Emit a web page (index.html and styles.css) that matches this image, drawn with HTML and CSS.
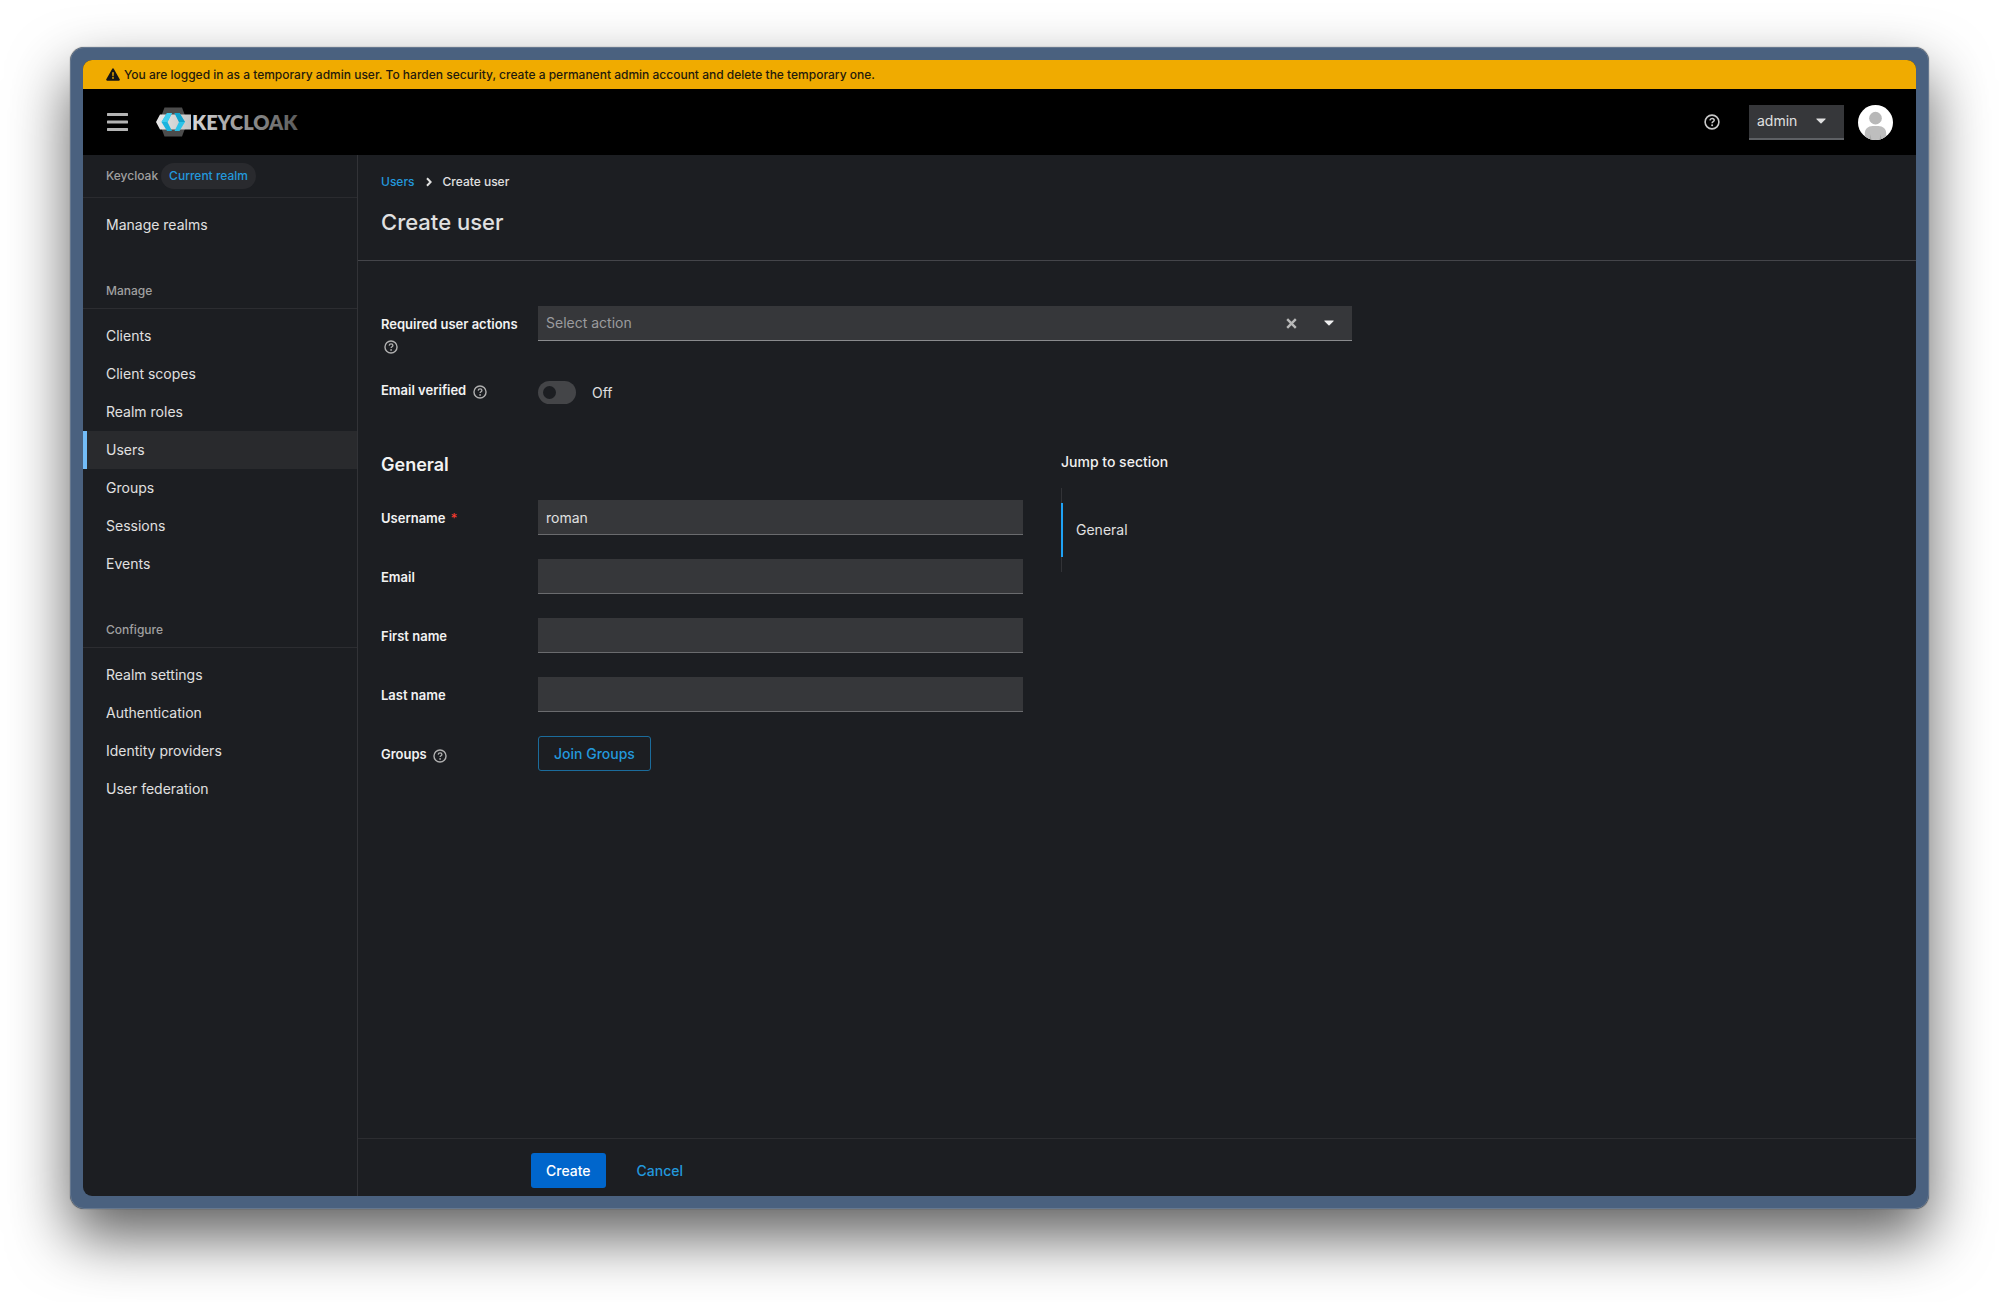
FILE: index.html
```html
<!DOCTYPE html>
<html lang="en">
<head>
<meta charset="utf-8">
<meta name="viewport" content="width=device-width, initial-scale=1">
<title>Create user - Keycloak</title>
<link rel="stylesheet" href="styles.css">
</head>
<body>
<svg class="defs" width="0" height="0" aria-hidden="true">
  <symbol id="help" viewBox="0 0 16 16">
    <circle cx="8" cy="8" r="6.9" fill="none" stroke="currentColor" stroke-width="1.6"/>
    <path d="M5.9 6.4c.2-1.3 1-2 2.2-2s2.1.8 2.1 1.8c0 1.5-2.1 1.5-2.1 3" fill="none" stroke="currentColor" stroke-width="1.5"/>
    <circle cx="8.1" cy="11.3" r="1" fill="currentColor"/>
  </symbol>
  <symbol id="caret" viewBox="0 0 10 6"><path d="M.8.5h8.4c.5 0 .6.5.3.8L5.5 5.2a.7.7 0 0 1-1 0L.5 1.300C.2 1 .3.5.8.5z" fill="currentColor"/></symbol>
</svg>
<div class="window">
  <div class="screen">
    <div class="banner" role="status">
      <svg width="14" height="13" viewBox="0 0 14 13" aria-hidden="true"><path fill="#151515" fill-rule="evenodd" d="M7 .3c.4 0 .7.200.9.600l5.800 10.300c.4.700 0 1.500-.9 1.500H1.200c-.9 0-1.300-.8-.9-1.500L6.100.9c.2-.4.500-.6.900-.6zM6.200 4.200l.2 4h1.200l.2-4zM7 9a.9.900 0 1 0 0 1.800A.9.900 0 0 0 7 9z"/></svg>
      <span>You are logged in as a temporary admin user. To harden security, create a permanent admin account and delete the temporary one.</span>
    </div>
    <header class="masthead">
      <button class="icon-button menu" type="button" aria-label="Global navigation">
        <svg width="21" height="18" viewBox="0 0 21 18"><path d="M1 1.500h19M1 9h19M1 16.500h19" stroke="currentColor" stroke-width="3" stroke-linecap="round"/></svg>
      </button>
      <a class="brand" href="#" aria-label="Keycloak">
        <svg width="160" height="30" viewBox="0 0 160 30">
          <defs>
            <linearGradient id="word" x1="0" x2="1" y1="0" y2="0"><stop offset="0" stop-color="#d8d8d8"/><stop offset=".55" stop-color="#8c8c8c"/><stop offset="1" stop-color="#5c5c5c"/></linearGradient>
            <linearGradient id="bar" x1="0" x2="1" y1="0" y2="0"><stop offset="0" stop-color="#e8e8e8"/><stop offset="1" stop-color="#c4c4c4"/></linearGradient>
          </defs>
          <path d="M8.500 .500h17.500l5.500 14.500L26 29.500H8.500L3 15z" fill="#4c4c4c"/>
          <path d="M4 7.500h31v15H4L0 15z" fill="url(#bar)"/>
          <path d="M11 6h5L11.500 15l4.500 9H11L5.500 15z" fill="#1cb4de"/>
          <path d="M11 6h5L11.500 15H5.500z" fill="#3fcdee"/>
          <path d="M18.500 6h5L29 15l-5.500 9h-5L23 15z" fill="#2cc3e8"/>
          <path d="M18.500 6h5L29 15H23z" fill="#12a2ca"/>
          <text x="36" y="23" class="wordmark" fill="url(#word)">KEYCLOAK</text>
        </svg>
      </a>
      <div class="tools">
        <button class="icon-button" type="button" aria-label="Help"><svg width="16" height="16"><use href="#help"/></svg></button>
        <button class="account" type="button" aria-haspopup="menu">admin <svg width="10" height="6"><use href="#caret"/></svg></button>
        <svg class="avatar" width="35" height="35" viewBox="0 0 36 36" role="img" aria-label="Avatar">
          <defs><clipPath id="round"><circle cx="18" cy="18" r="18"/></clipPath></defs>
          <g clip-path="url(#round)"><path fill="#fff" d="M0 0h36v36H0z"/><circle cx="18" cy="13.500" r="6.500" fill="#b8b8b8"/><path d="M7 36v-7c0-4.500 3.500-7.500 8-7.500h6c4.500 0 8 3 8 7.500v7z" fill="#bebebe"/><path d="M12.500 30l1.500 6h-2zM23.500 30L22 36h2z" fill="#a8a8a8"/></g>
        </svg>
      </div>
    </header>
    <div class="body">
      <nav class="sidebar" aria-label="Global">
        <div class="realm">Keycloak <span class="badge">Current realm</span></div>
        <ul class="links"><li><a href="#">Manage realms</a></li></ul>
        <h2>Manage</h2>
        <ul class="links">
          <li><a href="#">Clients</a></li>
          <li><a href="#">Client scopes</a></li>
          <li><a href="#">Realm roles</a></li>
          <li><a href="#" class="current" aria-current="page">Users</a></li>
          <li><a href="#">Groups</a></li>
          <li><a href="#">Sessions</a></li>
          <li><a href="#">Events</a></li>
        </ul>
        <h2>Configure</h2>
        <ul class="links">
          <li><a href="#">Realm settings</a></li>
          <li><a href="#">Authentication</a></li>
          <li><a href="#">Identity providers</a></li>
          <li><a href="#">User federation</a></li>
        </ul>
      </nav>
      <main class="main">
        <div class="heading">
          <nav class="crumbs" aria-label="Breadcrumb">
            <a href="#">Users</a>
            <svg width="6" height="10" viewBox="0 0 6 10" aria-hidden="true"><path d="M1 1.200L4.600 5 1 8.800" fill="none" stroke="#e0e0e0" stroke-width="2"/></svg>
            <span aria-current="page">Create user</span>
          </nav>
          <h1>Create user</h1>
        </div>
        <form class="form" id="create-user">
          <div class="row actions">
            <div class="label"><label for="actions">Required user actions</label> <button class="hint" type="button" aria-label="More help for required user actions"><svg width="14" height="14"><use href="#help"/></svg></button></div>
            <div class="combo">
              <input id="actions" type="text" role="combobox" aria-expanded="false" placeholder="Select action">
              <button class="icon-button" type="button" aria-label="Clear"><svg width="11" height="11" viewBox="0 0 11 11"><path d="M1.200 1.200l8.600 8.600M9.800 1.200L1.200 9.800" stroke="#b8b8b8" stroke-width="2.400"/></svg></button>
              <button class="icon-button" type="button" aria-label="Show actions"><svg width="10" height="6"><use href="#caret"/></svg></button>
            </div>
          </div>
          <div class="row verified">
            <div class="label"><label for="verified">Email verified</label> <button class="hint" type="button" aria-label="More help for email verified"><svg width="14" height="14"><use href="#help"/></svg></button></div>
            <div class="switch"><input id="verified" type="checkbox" role="switch"><span>Off</span></div>
          </div>
          <div class="columns">
            <section class="general">
              <h2>General</h2>
              <div class="row"><div class="label"><label for="username">Username <span class="required">*</span></label></div><input class="text" id="username" type="text" value="roman"></div>
              <div class="row"><div class="label"><label for="email">Email</label></div><input class="text" id="email" type="email"></div>
              <div class="row"><div class="label"><label for="first">First name</label></div><input class="text" id="first" type="text"></div>
              <div class="row"><div class="label"><label for="last">Last name</label></div><input class="text" id="last" type="text"></div>
              <div class="row"><div class="label"><label for="join">Groups</label> <button class="hint" type="button" aria-label="More help for groups"><svg width="14" height="14"><use href="#help"/></svg></button></div><button class="button outline" id="join" type="button">Join Groups</button></div>
            </section>
            <nav class="jump" aria-label="Jump to section">
              <div class="jump-title">Jump to section</div>
              <ul><li><a href="#">General</a></li></ul>
            </nav>
          </div>
        </form>
        <footer class="footer">
          <button class="button primary" type="submit" form="create-user">Create</button>
          <button class="button link" type="button">Cancel</button>
        </footer>
      </main>
    </div>
  </div>
</div>
</body>
</html>
```
FILE: styles.css
```css
:root {
  --bg: #1c1e22;
  --field: #36373a;
  --line: #323337;
  --text: #e0e0e0;
  --muted: #a0a0a0;
  --blue: #1fa2f5;
  --link: #2398dc;
}

* { box-sizing: border-box; }

body {
  margin: 0;
  min-height: 100vh;
  padding: 47px 70px 93px;
  display: flex;
  background: #fff;
  color: var(--text);
  font: 14px/20px Inter, "Open Sans", sans-serif;
}

h1, h2, ul { margin: 0; padding: 0; }
ul { list-style: none; }
a { color: var(--link); text-decoration: none; }
button, input { font: inherit; color: inherit; border: 0; border-radius: 0; background: none; padding: 0; margin: 0; }
svg { display: block; flex: none; }
.defs { position: absolute; }

.window {
  flex: 1;
  min-width: 0;
  display: flex;
  padding: 12px;
  border: 1px solid #66788f;
  border-radius: 14px;
  background: #4a617f;
  box-shadow: 0 0 1px #000a, 0 28px 60px #000000a0;
}

.screen {
  flex: 1;
  min-width: 0;
  display: flex;
  flex-direction: column;
  border-radius: 9px;
  overflow: hidden;
  background: var(--bg);
}

.banner {
  display: flex;
  align-items: center;
  gap: 4px;
  height: 29px;
  padding: 0 23px;
  background: #f0ab00;
  color: #1f1a0c;
  font-size: 12px;
  font-weight: 500;
}

.masthead {
  display: flex;
  align-items: center;
  height: 66px;
  padding: 0 23px 0 24px;
  background: #000;
}

.icon-button { display: flex; align-items: center; justify-content: center; }
.menu { color: #b4b4b4; }
.brand { margin-left: 28px; }
.wordmark { font: 800 20px Lato, sans-serif; }
.tools { display: flex; align-items: center; margin-left: auto; color: #c8c8c8; }

.account {
  display: flex;
  align-items: center;
  justify-content: space-between;
  width: 95px;
  height: 35px;
  margin: 0 14px 0 29px;
  padding: 0 18px 0 8px;
  border-bottom: 2px solid #5e6064;
  background: var(--field);
  color: var(--text);
}

.body { flex: 1; display: flex; min-height: 0; }

.sidebar { width: 275px; flex: none; border-right: 1px solid var(--line); }
.realm {
  display: flex;
  align-items: center;
  gap: 3px;
  height: 43px;
  padding: 0 23px;
  border-bottom: 1px solid #2a2b2f;
  color: var(--muted);
  font-size: 12px;
  font-weight: 500;
}
.badge { padding: 3px 8px; border-radius: 14px; background: #292a2e; color: var(--link); }
.links { padding: 8px 0; }
.links a {
  display: flex;
  align-items: center;
  height: 38px;
  padding: 0 23px 0 19px;
  border-left: 4px solid transparent;
  color: var(--text);
}
.links .current { border-left-color: #73bcf7; background: #292a2d; }
.sidebar h2 {
  margin-top: 20px;
  padding: 9px 23px 7px;
  border-bottom: 1px solid #2c2d31;
  color: var(--muted);
  font-size: 12px;
  font-weight: 500;
}

.main { flex: 1; min-width: 0; display: flex; flex-direction: column; }
.heading { padding: 17px 23px 22px; border-bottom: 1px solid #44454a; }
.crumbs { display: flex; align-items: center; gap: 11px; font-size: 12px; font-weight: 500; }
h1 { margin-top: 14px; font-size: 22px; font-weight: 500; line-height: 32px; }

.form { flex: 1; padding: 45px 23px; }
.row { display: grid; grid-template-columns: 157px minmax(0, 1fr); align-items: start; }
.row + .row { margin-top: 24px; }
.actions { max-width: 971px; }
.label { padding: 7px 8px 0 0; color: #f2f2f2; font-size: 13px; font-weight: 600; line-height: 22px; }
.hint { display: inline-block; padding: 3px; vertical-align: middle; color: #b0b0b0; }
.required { margin-left: 2px; color: #ff3b2f; font-weight: 400; }

.combo { display: flex; height: 35px; border-bottom: 1px solid #8a8b8e; background: var(--field); }
.combo input { flex: 1; min-width: 0; padding: 0 8px; }
.combo ::placeholder { color: #9b9b9e; opacity: 1; }
.combo button { width: 38px; color: #f0f0f0; }
.combo button:last-child { margin-right: 4px; }

.verified.row { margin-top: 18px; }
.verified .label { padding-top: 4px; }
.switch { display: flex; align-items: center; gap: 16px; height: 35px; }
.switch input {
  appearance: none;
  display: flex;
  align-items: center;
  width: 38px;
  height: 23px;
  padding: 0 5px;
  border-radius: 12px;
  background: #444548;
}
.switch input::before { content: ""; width: 13px; height: 13px; border-radius: 50%; background: var(--bg); }

.columns { display: flex; gap: 38px; margin-top: 41px; }
.general { flex: 0 1 642px; min-width: 0; }
.general h2 { margin-bottom: 21px; color: #f2f2f2; font-size: 18px; font-weight: 600; line-height: 28px; }
.text { width: 100%; height: 35px; padding: 0 8px; border-bottom: 1px solid #6a6b6e; background: var(--field); }

.jump-title { line-height: 22px; color: #f0f0f0; font-weight: 500; }
.jump ul { margin-top: 15px; padding: 15px 0; border-left: 1px solid var(--line); }
.jump a { display: block; margin-left: -1px; padding: 17px 13px; border-left: 2px solid var(--blue); color: var(--text); }

.button { height: 35px; padding: 0 15px; border-radius: 3px; justify-self: start; font-weight: 500; }
.outline { border: 1px solid #1b6c9c; color: var(--link); }
.primary { background: #06c; color: #fff; }
.link { color: var(--link); }
.footer { display: flex; gap: 16px; padding: 14px 23px 8px 173px; border-top: 1px solid #2c2d31; }
```
